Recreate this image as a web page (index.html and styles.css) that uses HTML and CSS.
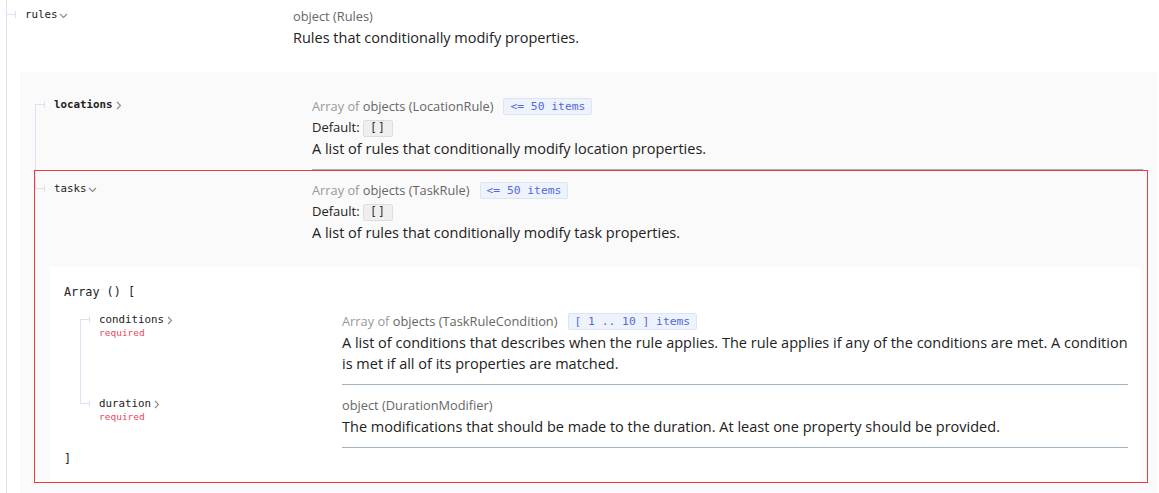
FILE: index.html
```html
<!DOCTYPE html>
<html lang="en">
<head>
<meta charset="utf-8">
<title>Rules schema</title>
<link rel="stylesheet" href="styles.css">
</head>
<body>
<div class="page">
  <div class="prop outer-prop expanded">
    <div class="row top-row">
      <div class="name-cell">
        <span class="tick"></span><span class="pname">rules</span><svg class="chev" width="9" height="9" viewBox="0 0 9 9"><polyline points="1,3 4.5,6.5 8,3" fill="none" stroke="#8a8a8a" stroke-width="1.1"/></svg>
      </div>
      <div class="detail">
        <div class="type"><span class="tname">object</span> <span class="ttitle">(Rules)</span></div>
        <div class="desc">Rules that conditionally modify properties.</div>
      </div>
    </div>

    <div class="nested grey">
      <div class="schema">
        <div class="prop first">
          <div class="row">
            <div class="name-cell">
              <span class="tick"></span><span class="pname bold">locations</span><svg class="chev" width="9" height="9" viewBox="0 0 9 9"><polyline points="3,1 6.5,4.5 3,8" fill="none" stroke="#8a8a8a" stroke-width="1.1"/></svg>
            </div>
            <div class="detail">
              <div class="type"><span class="tprefix">Array of </span><span class="tname">objects</span> <span class="ttitle">(LocationRule)</span><span class="badge">&lt;= 50 items</span></div>
              <div class="default">Default: <span class="dval">[]</span></div>
              <div class="desc">A list of rules that conditionally modify location properties.</div>
            </div>
          </div>
        </div>

        <div class="prop last expanded highlight">
          <div class="row">
            <div class="name-cell">
              <span class="tick"></span><span class="pname">tasks</span><svg class="chev" width="9" height="9" viewBox="0 0 9 9"><polyline points="1,3 4.5,6.5 8,3" fill="none" stroke="#8a8a8a" stroke-width="1.1"/></svg>
            </div>
            <div class="detail">
              <div class="type"><span class="tprefix">Array of </span><span class="tname">objects</span> <span class="ttitle">(TaskRule)</span><span class="badge">&lt;= 50 items</span></div>
              <div class="default">Default: <span class="dval">[]</span></div>
              <div class="desc">A list of rules that conditionally modify task properties.</div>
            </div>
          </div>

          <div class="nested white">
            <div class="array-label">Array () [</div>
            <div class="schema array-schema">
              <div class="prop first">
                <div class="row">
                  <div class="name-cell">
                    <span class="tick"></span><span class="pname">conditions</span><svg class="chev" width="9" height="9" viewBox="0 0 9 9"><polyline points="3,1 6.5,4.5 3,8" fill="none" stroke="#8a8a8a" stroke-width="1.1"/></svg>
                    <div class="required">required</div>
                  </div>
                  <div class="detail">
                    <div class="type"><span class="tprefix">Array of </span><span class="tname">objects</span> <span class="ttitle">(TaskRuleCondition)</span><span class="badge">[ 1 .. 10 ] items</span></div>
                    <div class="desc">A list of conditions that describes when the rule applies. The rule applies if any of the conditions are met. A condition is met if all of its properties are matched.</div>
                  </div>
                </div>
              </div>
              <div class="prop last">
                <div class="row">
                  <div class="name-cell">
                    <span class="tick"></span><span class="pname">duration</span><svg class="chev" width="9" height="9" viewBox="0 0 9 9"><polyline points="3,1 6.5,4.5 3,8" fill="none" stroke="#8a8a8a" stroke-width="1.1"/></svg>
                    <div class="required">required</div>
                  </div>
                  <div class="detail">
                    <div class="type"><span class="tname">object</span> <span class="ttitle">(DurationModifier)</span></div>
                    <div class="desc">The modifications that should be made to the duration. At least one property should be provided.</div>
                  </div>
                </div>
              </div>
            </div>
            <div class="array-close">]</div>
          </div>
        </div>
      </div>
    </div>
  </div>
</div>
</body>
</html>
```

FILE: styles.css
```css
* { box-sizing: border-box; }

html, body {
  margin: 0;
  background: #ffffff;
}

body {
  font-family: "Open Sans", "Liberation Sans", sans-serif;
  color: #333333;
  font-size: 14px;
}

.page {
  padding: 0 2px 0 6px;
  min-height: 493px;
}

.prop {
  position: relative;
}

.prop::before {
  content: "";
  position: absolute;
  left: 0;
  top: 0;
  bottom: 0;
  border-left: 1px solid #dce1f4;
}

.outer-prop {
  min-height: 493px;
}

.prop.first::before { top: 18px; }
.prop.last::before { bottom: auto; height: 19px; }

.row {
  display: flex;
  align-items: flex-start;
}

.outer-prop > .row { margin-right: 3px; }

.name-cell {
  position: relative;
  width: 25%;
  flex-shrink: 0;
  padding: 10px 10px 0 19px;
  line-height: 16px;
  white-space: nowrap;
}

.tick {
  position: absolute;
  left: 0;
  top: 15px;
  width: 10px;
  height: 7px;
  border-right: 1px solid #dce1f4;
}

.tick::before {
  content: "";
  position: absolute;
  left: 0;
  right: 0;
  top: 3px;
  border-top: 1px solid #dce1f4;
}

.pname {
  font-family: "DejaVu Sans Mono", "Liberation Mono", monospace;
  font-size: 10.8px;
  color: #222;
  vertical-align: middle;
}

.pname.bold { font-weight: bold; }

.chev {
  vertical-align: middle;
  margin-left: 1px;
}

.required {
  font-family: "DejaVu Sans Mono", "Liberation Mono", monospace;
  font-size: 9.5px;
  line-height: 10px;
  color: #e8475a;
}

.detail {
  flex: 1;
  min-width: 0;
  padding: 10px 0 10px 0;
  border-bottom: 1px solid #9fb4be;
}

.prop.expanded > .row > .detail { border-bottom: none; }

.top-row .name-cell { padding-top: 6px; }
.top-row .tick { top: 11px; }
.top-row .detail { padding-top: 6px; }

.type {
  font-size: 12.8px;
  line-height: 21px;
  color: #666666;
}

.tprefix { color: #999999; }
.tname { color: #666666; }
.ttitle { color: #666666; }

.badge {
  display: inline-block;
  margin-left: 10px;
  padding: 0 6px;
  font-family: "DejaVu Sans Mono", "Liberation Mono", monospace;
  font-size: 11.3px;
  line-height: 15px;
  color: #5468dc;
  background: #eef3fb;
  border: 1px solid #dbe5f6;
  border-radius: 2px;
  vertical-align: 1px;
}

.default {
  font-size: 13px;
  line-height: 21px;
  color: #222;
}

.dval {
  display: inline-block;
  padding: 0 6px;
  font-family: "DejaVu Sans Mono", "Liberation Mono", monospace;
  font-size: 11.5px;
  line-height: 15px;
  letter-spacing: 1px;
  color: #333;
  background: #efefef;
  border: 1px solid #dedede;
  border-radius: 2px;
}

.desc {
  font-size: 14.5px;
  line-height: 21px;
  color: #222;
}

.nested.grey {
  margin: 14px 0 0 14px;
  background: #fafafa;
  padding: 14px 14px 11px 15px;
}

.nested.white {
  margin: 14px 2px 0 15px;
  background: #ffffff;
  padding: 17px 13px 14px 14px;
}

.highlight { padding-bottom: 2px; }

.highlight::after {
  content: "";
  position: absolute;
  left: -1px;
  right: -5px;
  top: 0;
  bottom: 0;
  border: 1px solid #ee3a3a;
  pointer-events: none;
}

.array-label,
.array-close {
  font-family: "DejaVu Sans Mono", "Liberation Mono", monospace;
  font-size: 11.8px;
  line-height: 16px;
  color: #222;
}

.array-schema {
  margin: 1px 0 0 16px;
}

.array-close { margin-top: 3px; }
```
